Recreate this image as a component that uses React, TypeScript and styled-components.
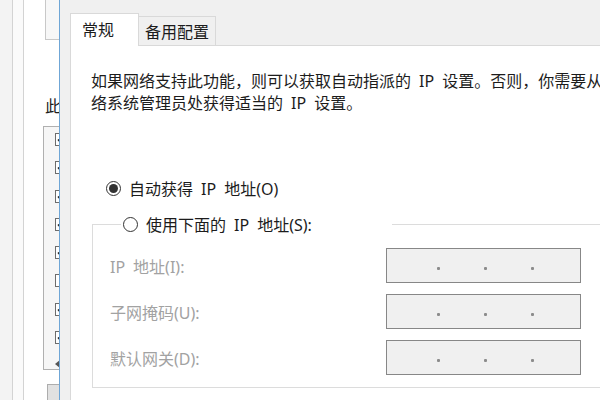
import React from 'react';
import styled, { createGlobalStyle } from 'styled-components';

export const Global = createGlobalStyle`
  * {
    box-sizing: border-box;
  }
  html, body {
    margin: 0;
    padding: 0;
    background: #f3f3f3;
  }
  body {
    font-family: 'Noto Sans', 'Noto Sans CJK SC', sans-serif;
    font-size: 16px;
    color: #1c1c1c;
  }
`;

const Desktop = styled.div`
  display: flex;
  width: 600px;
  height: 400px;
  overflow: hidden;
`;

/* window behind the dialog, only its right edge shows */
const BackWindow = styled.div`
  flex: 0 0 59px;
  min-width: 0;
  overflow: hidden;
  background: #f3f3f3;
  padding-left: 12px;
  display: flex;
`;

const BackFrame = styled.div`
  flex: 1;
  min-width: 0;
  border-left: 1px solid #d3d3d3;
  background: #fafafa;
  padding-left: 10px;
  display: flex;
`;

const BackPane = styled.div`
  flex: 1;
  min-width: 0;
  border-left: 1px solid #d3d3d3;
  background: #ffffff;
  padding-left: 19px;
  overflow: hidden;
  display: flex;
  flex-direction: column;
`;

const TopBox = styled.div`
  margin-left: 2px;
  width: 40px;
  height: 40px;
  flex: none;
  border: 1px solid #c8c8c8;
  border-top: none;
  background: #f7f7f7;
`;

const BackLabel = styled.div`
  margin: 58px 0 0 2px;
  height: 14px;
  line-height: 14px;
  white-space: nowrap;
  font-family: 'Noto Sans CJK SC', sans-serif;
`;

const ListBox = styled.div`
  margin-top: 14px;
  width: 60px;
  height: 244px;
  flex: none;
  border: 1px solid #b0b0b0;
  background: #f6f6f6;
  padding: 6px 0 0 11px;
  display: flex;
  flex-direction: column;
`;

const ListRow = styled.div`
  height: 28.3px;
  flex: none;
  display: flex;
  align-items: flex-start;
`;

const CheckBox = styled.div`
  width: 13px;
  height: 13px;
  border: 1px solid #6d6d6d;
  background: #ffffff;
  display: flex;
  align-items: center;
  justify-content: center;
`;

const ScrollBar = styled.div`
  margin-top: auto;
  height: 20px;
  display: flex;
  align-items: center;
`;

const Arrow = styled.div`
  width: 0;
  height: 0;
  border-top: 4px solid transparent;
  border-bottom: 4px solid transparent;
  border-right: 5px solid #555;
`;

const BackButton = styled.div`
  margin: 14px 0 0 4px;
  width: 40px;
  height: 24px;
  flex: none;
  border: 1px solid #adadad;
  background: #e1e1e1;
`;

/* the properties dialog */
const Dialog = styled.div`
  flex: 1;
  min-width: 0;
  border-left: 1px solid #6fa6d6;
  background: #f0f0f0;
  padding: 13px 0 0 10px;
  display: flex;
  flex-direction: column;
  overflow: hidden;
`;

const TabBar = styled.div`
  display: flex;
  align-items: flex-end;
  margin-bottom: -1px;
  font-family: 'Noto Sans CJK SC', sans-serif;
`;

const Tab = styled.div<{ $active?: boolean; $width: number }>`
  width: ${p => p.$width}px;
  height: ${p => (p.$active ? 33 : 29)}px;
  margin-bottom: ${p => (p.$active ? 0 : 1)}px;
  border: 1px solid #d9d9d9;
  border-bottom: none;
  ${p => !p.$active && 'border-left: none;'}
  background: ${p => (p.$active ? '#ffffff' : '#f0f0f0')};
  padding-left: ${p => (p.$active ? 11 : 6)}px;
  line-height: ${p => (p.$active ? 31 : 29)}px;
  position: relative;
  z-index: ${p => (p.$active ? 1 : 0)};
  white-space: nowrap;
`;

const Panel = styled.div`
  flex: 1;
  border-top: 1px solid #d9d9d9;
  border-left: 1px solid #d9d9d9;
  background: #ffffff;
  padding: 24px 0 0 20px;
  overflow: hidden;
`;

const Description = styled.div`
  line-height: 22px;
  white-space: nowrap;
`;

const RadioRow = styled.div`
  margin: 63px 0 0 15px;
  height: 22px;
  display: flex;
  align-items: center;
  gap: 8px;
  white-space: nowrap;
`;

const Radio = styled.span<{ $checked?: boolean }>`
  width: 15px;
  height: 15px;
  flex: none;
  border-radius: 50%;
  border: 1px solid #333333;
  background: #ffffff;
  display: flex;
  align-items: center;
  justify-content: center;

  &::after {
    content: '';
    width: 9px;
    height: 9px;
    border-radius: 50%;
    background: ${p => (p.$checked ? '#333333' : 'transparent')};
  }
`;

const GroupBox = styled.fieldset`
  margin: 14px 0 0 1px;
  width: 560px;
  min-width: 0;
  border: 1px solid #dcdcdc;
  padding: 13px 0 12px 17px;
  display: flex;
  flex-direction: column;
  gap: 11px;
`;

const GroupLegend = styled.legend`
  margin-left: 11px;
  padding: 0 0 0 2px;
  width: 271px;
  height: 22px;
  background: #ffffff;
  display: flex;
  align-items: center;
  gap: 8px;
  white-space: nowrap;
`;

const FieldRow = styled.div`
  display: flex;
  align-items: center;
  height: 35px;
`;

const FieldLabel = styled.div`
  width: 276px;
  color: #a2a2a2;
  white-space: nowrap;
`;

const IpBox = styled.div`
  width: 195px;
  height: 35px;
  border: 1px solid #878787;
  background: #f0f0f0;
  padding-left: 6px;
  display: flex;
  align-items: center;
`;

const Octet = styled.span`
  width: 44px;
  flex: none;
`;

const Dot = styled.span`
  width: 3px;
  height: 3px;
  margin-top: 5px;
  flex: none;
  background: #8c8c8c;
  border-radius: 1px;
`;

const Check = () => (
  <svg width="11" height="11" viewBox="0 0 11 11">
    <path d="M2 5.5 L4.5 8 L9 2.5" fill="none" stroke="#222" strokeWidth="1.6" />
  </svg>
);

const IpField = () => (
  <IpBox>
    <Octet />
    <Dot />
    <Octet />
    <Dot />
    <Octet />
    <Dot />
    <Octet />
  </IpBox>
);

// Windows spaces the latin words out more than a plain space does
const sp = '\u2002';

const listItems = [true, true, true, true, true, false, true, true];

const fields = [`IP${sp}地址(I):`, '子网掩码(U):', '默认网关(D):'];

const App: React.FC = () => {
  return (
    <Desktop>
      <Global />
      <BackWindow>
        <BackFrame>
          <BackPane>
            <TopBox />
            <BackLabel>此</BackLabel>
            <ListBox>
              {listItems.map((checked, i) => (
                <ListRow key={i}>
                  <CheckBox>{checked && <Check />}</CheckBox>
                </ListRow>
              ))}
              <ScrollBar>
                <Arrow />
              </ScrollBar>
            </ListBox>
            <BackButton />
          </BackPane>
        </BackFrame>
      </BackWindow>

      <Dialog>
        <TabBar>
          <Tab $active $width={69}>常规</Tab>
          <Tab $width={77}>备用配置</Tab>
        </TabBar>
        <Panel>
          <Description>
            如果网络支持此功能，则可以获取自动指派的{sp}IP{sp}设置。否则，你需要从网
          </Description>
          <Description>络系统管理员处获得适当的{sp}IP{sp}设置。</Description>

          <RadioRow>
            <Radio $checked />
            自动获得{sp}IP{sp}地址(O)
          </RadioRow>

          <GroupBox>
            <GroupLegend>
              <Radio />
              使用下面的{sp}IP{sp}地址(S):
            </GroupLegend>
            {fields.map(label => (
              <FieldRow key={label}>
                <FieldLabel>{label}</FieldLabel>
                <IpField />
              </FieldRow>
            ))}
          </GroupBox>
        </Panel>
      </Dialog>
    </Desktop>
  );
};

export default App;
